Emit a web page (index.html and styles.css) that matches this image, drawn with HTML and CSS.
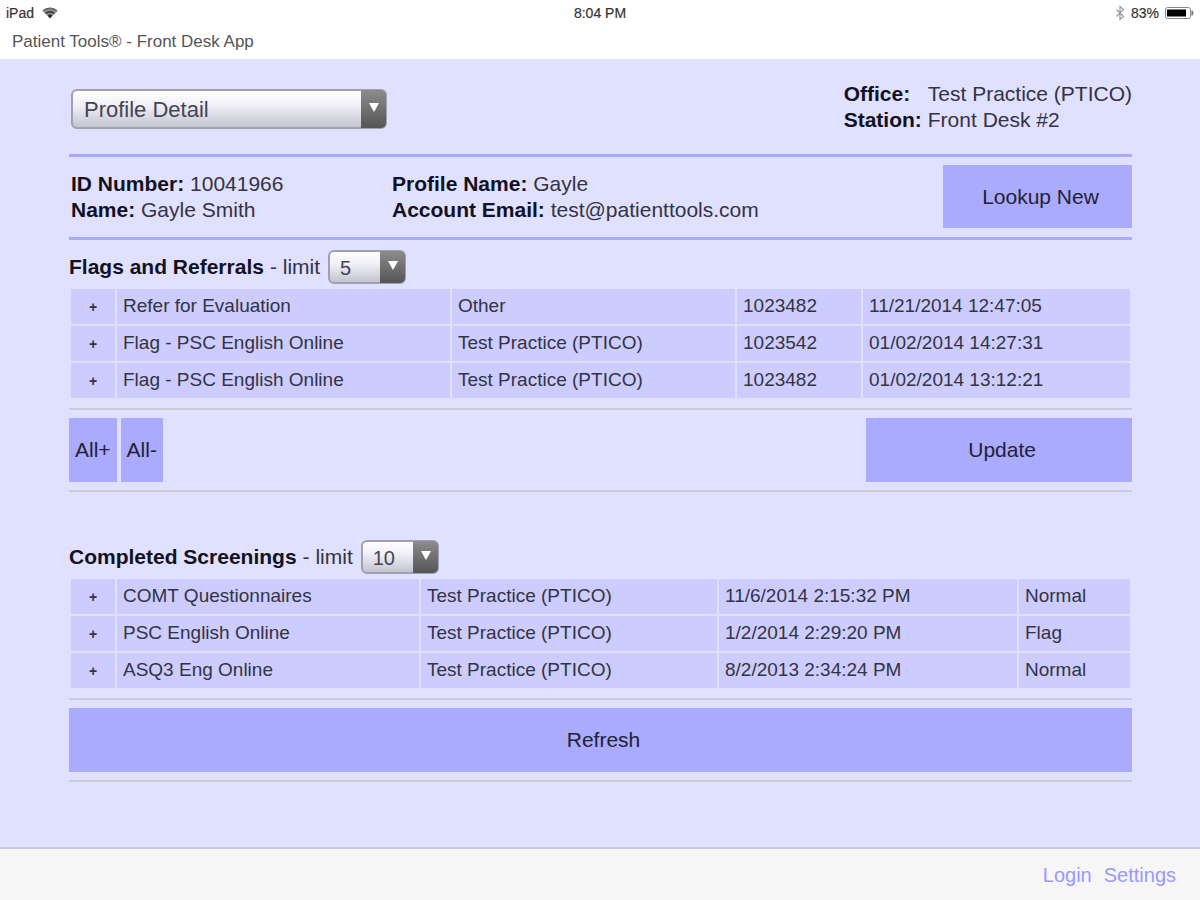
FILE: index.html
```
<!DOCTYPE html>
<html lang="en">
<head>
    <meta charset="UTF-8">
    <meta name="viewport" content="width=device-width, initial-scale=1">
    <title>Patient Tools® - Front Desk App</title>
    <link rel="stylesheet" href="styles.css">
</head>
<body>
    <div class="status-bar">
        <div class="status-left">
            <span>iPad</span>
            <svg width="16" height="12" viewBox="0 0 16 12">
                <path d="M0.500 4a10.500 10.500 0 0 1 15 0L8 11z" fill="#999"/>
                <path d="M1.200 4.200a9.600 9.600 0 0 1 13.600 0" fill="none" stroke="#666" stroke-width="1.800"/>
                <path d="M3.600 6.600a6.200 6.200 0 0 1 8.800 0" fill="none" stroke="#444" stroke-width="1.800"/>
                <path d="M8 11.400 5.400 8.600a3.700 3.700 0 0 1 5.200 0z" fill="#333"/>
            </svg>
        </div>
        <div class="status-time">8:04 PM</div>
        <div class="status-right">
            <svg width="10" height="16" viewBox="0 0 10 16">
                <path d="M1.500 4.500l7 7L5 14.500v-13l3.500 3-7 7" fill="none" stroke="#999" stroke-width="1.200"/>
            </svg>
            <span>83%</span>
            <svg width="29" height="12" viewBox="0 0 29 12">
                <rect x="0.5" y="0.5" width="25" height="11" rx="2" fill="#fff" stroke="#888"/>
                <rect x="2" y="2.5" width="19" height="7" fill="#000"/>
                <path d="M26.500 3c2.600 1 2.600 5 0 6z" fill="#777"/>
            </svg>
        </div>
    </div>
    <h1 class="app-title">Patient Tools® - Front Desk App</h1>

    <main>
        <header class="page-header">
            <span class="select-box select-page">
                <select aria-label="Page">
                    <option>Profile Detail</option>
                </select>
            </span>
            <dl class="office">
                <dt>Office:</dt><dd>Test Practice (PTICO)</dd>
                <dt>Station:</dt><dd>Front Desk #2</dd>
            </dl>
        </header>

        <section class="profile">
            <div>
                <div><b>ID Number:</b> 10041966</div>
                <div><b>Name:</b> Gayle Smith</div>
            </div>
            <div>
                <div><b>Profile Name:</b> Gayle</div>
                <div><b>Account Email:</b> test@patienttools.com</div>
            </div>
            <button class="btn btn-lookup" type="button">Lookup New</button>
        </section>

        <section class="flags">
            <div class="section-head">
                <h2>Flags and Referrals</h2>
                <label for="flag-limit">- limit</label>
                <span class="select-box select-limit">
                    <select id="flag-limit">
                        <option>5</option>
                        <option>10</option>
                    </select>
                </span>
            </div>
            <table class="data-table">
                <colgroup>
                    <col class="col-plus"><col class="col-flag"><col class="col-place"><col class="col-number"><col>
                </colgroup>
                <tbody>
                    <tr><td>+</td><td>Refer for Evaluation</td><td>Other</td><td>1023482</td><td>11/21/2014 12:47:05</td></tr>
                    <tr><td>+</td><td>Flag - PSC English Online</td><td>Test Practice (PTICO)</td><td>1023542</td><td>01/02/2014 14:27:31</td></tr>
                    <tr><td>+</td><td>Flag - PSC English Online</td><td>Test Practice (PTICO)</td><td>1023482</td><td>01/02/2014 13:12:21</td></tr>
                </tbody>
            </table>
            <div class="actions">
                <button class="btn btn-small" type="button">All+</button>
                <button class="btn btn-small" type="button">All-</button>
                <button class="btn btn-update" type="button">Update</button>
            </div>
        </section>

        <section class="screenings">
            <div class="section-head">
                <h2>Completed Screenings</h2>
                <label for="screening-limit">- limit</label>
                <span class="select-box select-limit">
                    <select id="screening-limit">
                        <option>10</option>
                        <option>20</option>
                    </select>
                </span>
            </div>
            <table class="data-table">
                <colgroup>
                    <col class="col-plus"><col class="col-screening"><col class="col-practice"><col class="col-date"><col>
                </colgroup>
                <tbody>
                    <tr><td>+</td><td>COMT Questionnaires</td><td>Test Practice (PTICO)</td><td>11/6/2014 2:15:32 PM</td><td>Normal</td></tr>
                    <tr><td>+</td><td>PSC English Online</td><td>Test Practice (PTICO)</td><td>1/2/2014 2:29:20 PM</td><td>Flag</td></tr>
                    <tr><td>+</td><td>ASQ3 Eng Online</td><td>Test Practice (PTICO)</td><td>8/2/2013 2:34:24 PM</td><td>Normal</td></tr>
                </tbody>
            </table>
            <div class="actions">
                <button class="btn btn-refresh" type="button">Refresh</button>
            </div>
        </section>
    </main>

    <footer>
        <a href="#">Login</a>
        <a href="#">Settings</a>
    </footer>
</body>
</html>
```
FILE: styles.css
```
* {
    box-sizing: border-box;
}

body {
    display: flex;
    flex-direction: column;
    min-height: 100vh;
    margin: 0;
    background-color: #fff;
    color: #334;
    font-family: "Liberation Sans", Arial, sans-serif;
    font-size: 21px;
    line-height: 26px;
}

/* top bars */
.status-bar {
    display: grid;
    grid-template-columns: 1fr auto 1fr;
    align-items: center;
    padding: 0 6px;
    color: #333;
    font-size: 14px;
    -webkit-text-stroke: 0.2px #333;
}

.status-left,
.status-right {
    display: flex;
    align-items: center;
    gap: 8px;
}

.status-right {
    gap: 6px;
    justify-content: flex-end;
}

.app-title {
    margin: 0;
    padding: 3px 12px 4px;
    color: #555;
    font-size: 17px;
    font-weight: normal;
}

main {
    flex: 1;
    padding: 22px 68px 48px 69px;
    background-color: #e0e0ff;
}

.page-header {
    display: flex;
    justify-content: space-between;
    align-items: flex-end;
    padding-left: 2px;
    margin-bottom: 21px;
}

.office {
    display: grid;
    grid-template-columns: auto auto;
    column-gap: 6px;
    margin: 0;
}

.office dt {
    color: #112;
    font-weight: bold;
}

.office dd {
    margin: 0;
}

/* drop-downs */
.select-box {
    position: relative;
    display: inline-block;
}

.select-box select {
    appearance: none;
    display: block;
    width: 100%;
    height: 100%;
    margin: 0;
    padding: 0 11px;
    border: 2px solid #a0a0b0;
    border-radius: 6px;
    background: linear-gradient(#fff, #f0f0f6 40%, #c4c4d0);
    color: #445;
    font-family: inherit;
    font-size: 22px;
}

.select-box::before {
    content: "";
    position: absolute;
    top: 1px;
    right: 1px;
    bottom: 1px;
    width: 25px;
    border-radius: 0 5px 5px 0;
    background: linear-gradient(#8c8c8c, #555);
    pointer-events: none;
    z-index: 1;
}

.select-box::after {
    content: "";
    position: absolute;
    top: calc(50% - 6px);
    right: 8px;
    border-top: 9px solid #fff;
    border-left: 5px solid transparent;
    border-right: 5px solid transparent;
    pointer-events: none;
    z-index: 1;
}

.select-page {
    width: 316px;
    height: 40px;
    margin-bottom: 4px;
}

.select-limit {
    width: 78px;
    height: 34px;
    margin-left: 2px;
}

.select-box.select-limit select {
    padding: 2px 10px 0;
    font-size: 20px;
}

/* profile */
.profile {
    display: grid;
    grid-template-columns: 321px 1fr auto;
    align-items: center;
    padding: 8px 0 9px 2px;
    border-top: 3px solid #aaf;
    border-bottom: 3px solid #aaf;
}

.profile b {
    color: #112;
}

.btn {
    height: 64px;
    padding: 0 6px 0 12px;
    border: none;
    background-color: #aaf;
    color: #223;
    font-family: inherit;
    font-size: 21px;
    cursor: pointer;
}

.btn:hover {
    background-color: #99f;
}

.btn-small {
    padding: 0 6px;
}

.btn-lookup {
    width: 189px;
    height: 63px;
}

/* sections */
.flags {
    margin: 10px 0 48px;
}

.section-head {
    display: flex;
    align-items: center;
    gap: 6px;
    margin-bottom: 3px;
}

.section-head h2 {
    margin: 0;
    color: #112;
    font-size: 21px;
}

.data-table {
    width: 100%;
    table-layout: fixed;
    border-spacing: 2px;
    font-size: 19px;
}

.data-table td {
    height: 35px;
    padding: 0 6px 1px;
    background-color: #ccf;
}

.data-table td:first-child {
    padding: 0;
    text-align: center;
    font-size: 14px;
    font-weight: bold;
}

.col-plus {
    width: 44px;
}

.col-flag {
    width: 333px;
}

.col-place {
    width: 283px;
}

.col-number {
    width: 124px;
}

.col-screening {
    width: 302px;
}

.col-practice {
    width: 296px;
}

.col-date {
    width: 298px;
}

.actions {
    display: flex;
    gap: 4px;
    margin-top: 8px;
    padding: 8px 0;
    border-top: 2px solid #ccccd8;
    border-bottom: 2px solid #ccccd8;
}

.btn-update {
    width: 25%;
    margin-left: auto;
}

.btn-refresh {
    flex: 1;
}

footer {
    display: flex;
    justify-content: flex-end;
    gap: 12px;
    padding: 13px 24px 12px;
    border-top: 2px solid #c8c8e0;
    background-color: #f6f6f6;
    font-size: 20px;
}

footer a {
    color: #99f;
    text-decoration: none;
}
```
